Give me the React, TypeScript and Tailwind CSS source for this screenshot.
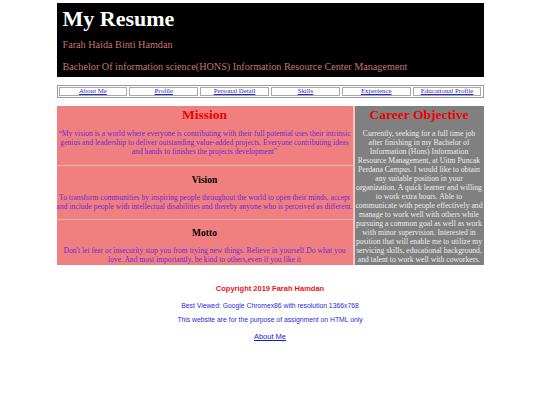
import React from 'react'

const navItems = ['About Me', 'Profile', 'Personal Detail', 'Skills', 'Experience', 'Educational Profile']

const careerLines = [
  'Currently, seeking for a full time job',
  'after finishing in my Bachelor of',
  'Information (Hons) Information',
  'Resource Management, at Uitm Puncak',
  'Perdana Campus. I would like to obtain',
  'any suitable position in your',
  'organization. A quick learner and willing',
  'to work extra hours. Able to',
  'communicate with people effectively and',
  'manage to work well with others while',
  'pursuing a common goal as well as work',
  'with minor supervision. Interested in',
  'position that will enable me to utilize my',
  'servicing skills, educational background,',
  'and talent to work well with coworkers.',
]

export default function App() {
  return (
    <div className="min-h-[405px] bg-white font-['Liberation_Serif',serif]">
      <div className="w-[427px] mx-auto pt-[3px]">
        {/* Header */}
        <div className="bg-black h-[74px] px-[6px] pt-[5px]">
          <h1 className="text-white font-bold text-[22px] leading-[22px]">My Resume</h1>
          <p className="text-[#c77474] text-[10.2px] leading-[12px] mt-[8.5px]">Farah Haida Binti Hamdan</p>
          <p className="text-[#c77474] text-[10.2px] leading-[12px] mt-[10.5px]">
            Bachelor Of information science(HONS) Information Resource Center Management
          </p>
        </div>

        {/* Nav */}
        <div className="mt-[8px] h-[13px] flex gap-[2px] border border-[#9a9a9a] p-[1px]">
          {navItems.map((item) => (
            <div key={item} className="flex-1 border border-[#a8a8a8] flex items-center justify-center">
              <a href="#" className="text-[6.8px] leading-none text-[#2a2ac8] underline">
                {item}
              </a>
            </div>
          ))}
        </div>

        {/* Main */}
        <div className="mt-[8px] grid grid-cols-[296px_1fr] gap-x-[2px] bg-[#f6c4c4]">
          <div className="bg-[#f08080] flex flex-col text-center">
            <div className="h-[59px] pt-[2px]">
              <h2 className="text-[#ee0000] font-bold text-[13.5px] leading-[14px]">Mission</h2>
              <p className="text-[#7426d8] text-[7.6px] leading-[9px] mt-[6.5px]">
                “My vision is a world where everyone is contributing with their full potential uses their intrinsic genius
                and leadership to deliver outstanding value-added projects. Everyone contributing ideas and hands to
                finishes the projects development”
              </p>
            </div>
            <div className="h-[1px] bg-[#f6b4b4]" />
            <div className="h-[53px] pt-[8px]">
              <h3 className="text-black font-bold text-[9.5px] leading-[12px]">Vision</h3>
              <p className="text-[#7426d8] text-[7.6px] leading-[9px] mt-[6.5px]">
                To transform communities by inspiring people throughout the world to open their minds, accept and include
                people with intellectual disabilities and thereby anyone who is perceived as different.
              </p>
            </div>
            <div className="h-[1px] bg-[#f6b4b4]" />
            <div className="h-[45px] pt-[7px]">
              <h3 className="text-black font-bold text-[9.5px] leading-[12px]">Motto</h3>
              <p className="text-[#7426d8] text-[7.6px] leading-[9px] mt-[6.5px] px-[1px]">
                Don't let fear or insecurity stop you from trying new things. Believe in yourself.Do what you love. And
                most importantly, be kind to others,even if you like it
              </p>
            </div>
          </div>
          <div className="bg-[#808080] text-center pt-[2px]">
            <h2 className="text-[#ee0000] font-bold text-[13.5px] leading-[14px]">Career Objective</h2>
            <p className="text-[#ececec] text-[7.7px] leading-[9px] mt-[6.5px]">
              {careerLines.map((line) => (
                <span key={line} className="block whitespace-nowrap">
                  {line}
                </span>
              ))}
            </p>
          </div>
        </div>

        {/* Footer */}
        <div className="font-['Liberation_Sans',sans-serif] text-center">
          <p className="text-[#e8141a] font-bold text-[7.5px] leading-[9px] mt-[18.5px]">Copyright 2019 Farah Hamdan</p>
          <p className="text-[#2b2bd8] text-[6.8px] leading-[9px] mt-[8px]">
            Best Viewed: Google Chromex86 with resolution 1366x768
          </p>
          <p className="text-[#2b2bd8] text-[6.8px] leading-[9px] mt-[5.5px]">
            This website are for the purpose of assignment on HTML only
          </p>
          <p className="mt-[5px] leading-[10px]">
            <a href="#" className="text-[#1a1acc] text-[7.5px] underline">
              About Me
            </a>
          </p>
        </div>
      </div>
    </div>
  )
}
